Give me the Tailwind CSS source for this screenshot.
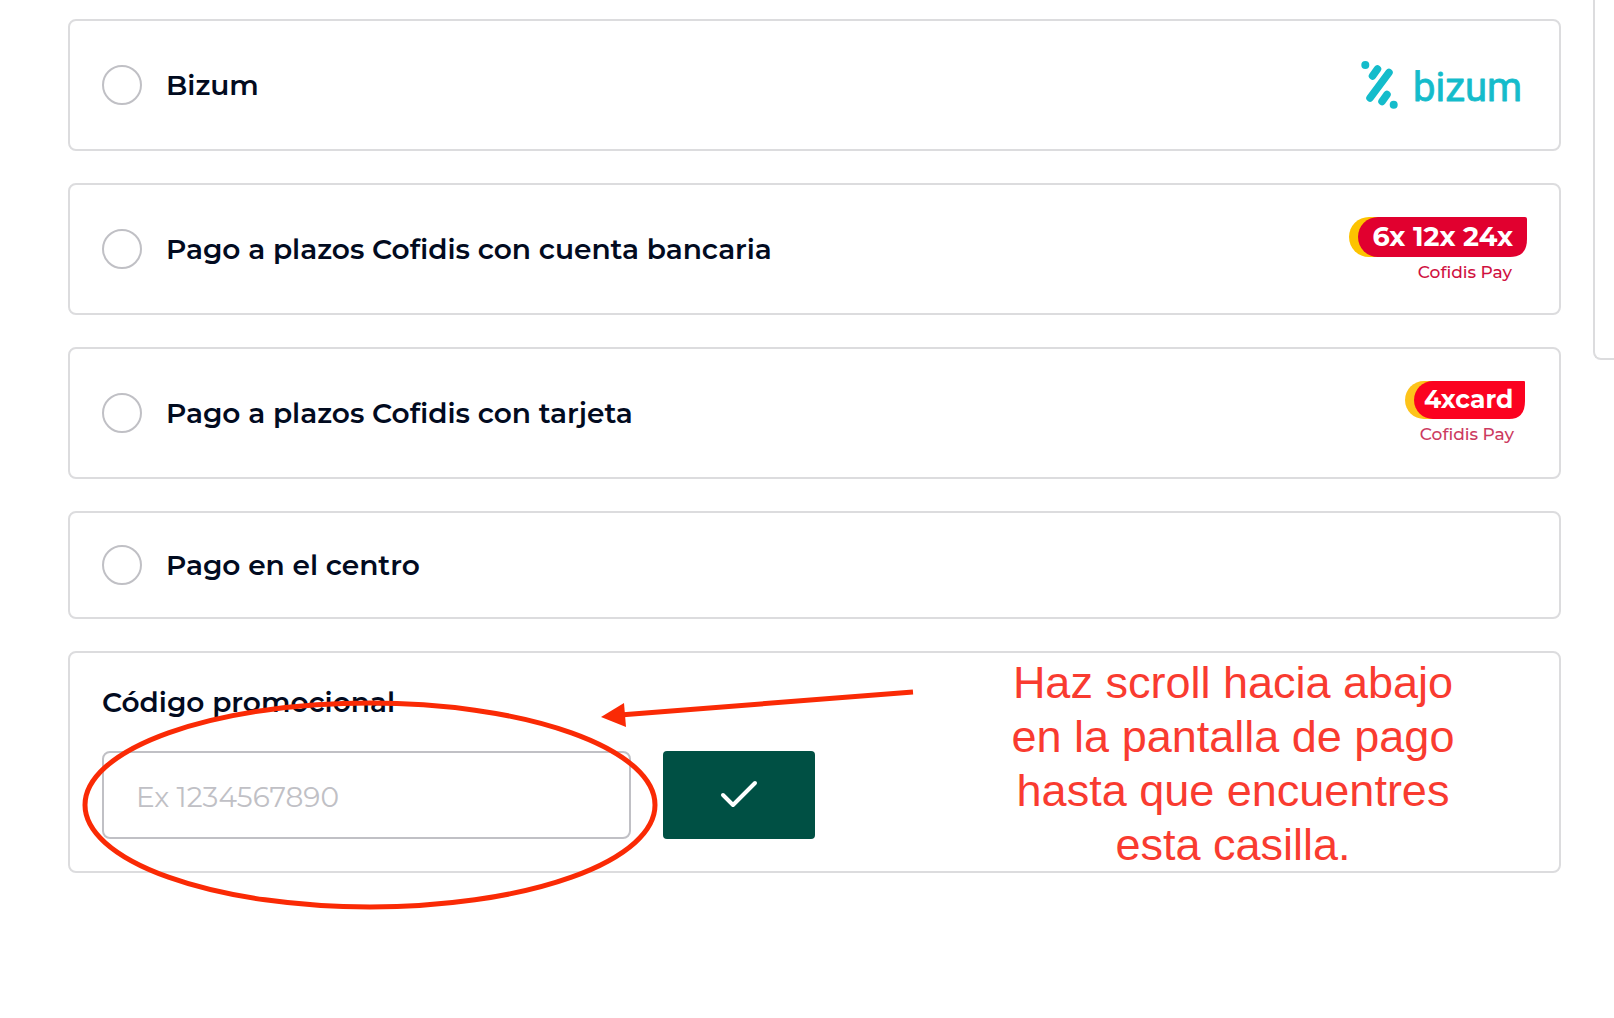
<!DOCTYPE html>
<html lang="es">
  <head>
    <meta charset="UTF-8" />
    <meta name="viewport" content="width=device-width, initial-scale=1.0" />
    <title>Métodos de pago</title>
    <script src="https://cdn.jsdelivr.net/npm/@tailwindcss/browser@4"></script>
  </head>
  <body class="flex items-start gap-8 min-h-screen overflow-x-hidden bg-white pl-17 font-['Montserrat','Inter',sans-serif] text-[28px] leading-[34px] text-[#020b1f]">
    <main class="flex flex-col flex-1 min-w-0 gap-8 pt-[19px] pb-8">
      <!-- Bizum -->
      <label class="flex items-center gap-6 p-8 border-2 border-[#dcdcde] rounded-lg cursor-pointer">
        <input type="radio" name="payment" value="bizum"
          class="w-10 h-10 shrink-0 appearance-none rounded-full border-2 border-[#c0c0c5] checked:border-[12px] checked:border-[#005044]" />
        <span class="flex-1 font-semibold">Bizum</span>
        <svg class="w-[180px] h-16 shrink-0" viewBox="0 0 180 64" role="img" aria-label="bizum">
          <g fill="none" stroke="#14bccb" stroke-width="7.5" stroke-linecap="round">
            <path d="M30.5 16 25.5 23" />
            <path d="M42 19.5 23 45" />
            <path d="M40 41.5 35 48.5" />
          </g>
          <circle cx="18.3" cy="12" r="4" fill="#14bccb" />
          <circle cx="46.7" cy="51.7" r="4" fill="#14bccb" />
          <text x="66" y="48" font-size="40" fill="#14bccb" stroke="#14bccb" stroke-width="0.8" stroke-linejoin="round" class="font-['Roboto',sans-serif]">bizum</text>
        </svg>
      </label>

      <!-- Cofidis cuenta bancaria -->
      <label class="flex items-center gap-6 p-8 border-2 border-[#dcdcde] rounded-lg cursor-pointer">
        <input type="radio" name="payment" value="cofidis-account"
          class="w-10 h-10 shrink-0 appearance-none rounded-full border-2 border-[#c0c0c5] checked:border-[12px] checked:border-[#005044]" />
        <span class="flex-1 font-semibold">Pago a plazos Cofidis con cuenta bancaria</span>
        <svg class="w-[180px] h-16 shrink-0" viewBox="0 0 180 64" role="img" aria-label="6x 12x 24x Cofidis Pay">
          <path d="M22 0H60V40H22A20 20 0 0 1 22 0Z" fill="#fdc300" />
          <path d="M31 0H178Q180 0 180 2V22Q180 40 163 40H31A20 20 0 0 1 31 0Z" fill="#e1002f" />
          <text x="166" y="29" font-size="27" font-weight="700" text-anchor="end" fill="#fff">6x 12x 24x</text>
          <text x="165" y="61" font-size="17" font-weight="500" text-anchor="end" fill="#d0103f">Cofidis Pay</text>
        </svg>
      </label>

      <!-- Cofidis tarjeta -->
      <label class="flex items-center gap-6 p-8 border-2 border-[#dcdcde] rounded-lg cursor-pointer">
        <input type="radio" name="payment" value="cofidis-card"
          class="w-10 h-10 shrink-0 appearance-none rounded-full border-2 border-[#c0c0c5] checked:border-[12px] checked:border-[#005044]" />
        <span class="flex-1 font-semibold">Pago a plazos Cofidis con tarjeta</span>
        <svg class="w-[122px] h-16 shrink-0" viewBox="0 0 122 64" role="img" aria-label="4xcard Cofidis Pay">
          <path d="M19 0H50V38H19A19 19 0 0 1 19 0Z" fill="#fdc31a" />
          <path d="M28 0H119Q120 0 120 1V20Q120 38 104 38H28A19 19 0 0 1 28 0Z" fill="#fb0220" />
          <text x="19" y="27" font-size="25" font-weight="700" fill="#fff">4xcard</text>
          <text x="109" y="59" font-size="17" font-weight="500" text-anchor="end" fill="#cc3a60">Cofidis Pay</text>
        </svg>
      </label>

      <!-- Centro -->
      <label class="flex items-center gap-6 p-8 border-2 border-[#dcdcde] rounded-lg cursor-pointer">
        <input type="radio" name="payment" value="center"
          class="w-10 h-10 shrink-0 appearance-none rounded-full border-2 border-[#c0c0c5] checked:border-[12px] checked:border-[#005044]" />
        <span class="flex-1 font-semibold">Pago en el centro</span>
      </label>

      <!-- Promo code -->
      <form class="relative p-8 border-2 border-[#dcdcde] rounded-lg">
        <label for="promo" class="block mb-8 font-semibold">Código promocional</label>
        <div class="flex gap-8">
          <input type="text" id="promo" name="promo" placeholder="Ex 1234567890"
            class="w-[529px] h-22 px-8 pt-1 border-2 border-[#c0c0c5] rounded-lg placeholder:text-[#c0c0c5]" />
          <button type="button" aria-label="Aplicar" class="flex items-center justify-center w-38 h-22 rounded bg-[#005044]">
            <svg class="w-10 h-10" viewBox="0 0 40 40" fill="none" stroke="#fff" stroke-width="4" stroke-linecap="round" stroke-linejoin="round">
              <path d="M4 20 14 30 36 8" />
            </svg>
          </button>
        </div>

        <!-- Notes over the form -->
        <svg class="absolute top-0 left-0 w-[860px] h-[270px] pointer-events-none" viewBox="0 0 860 270" fill="none" stroke="#fa2a05" stroke-width="5" aria-hidden="true">
          <ellipse cx="300" cy="152" rx="285" ry="102" />
          <path d="M550 62 843 39" />
          <path d="M531 64 554 50 556 74Z" fill="#fa2a05" stroke="none" />
        </svg>
        <p class="absolute inset-y-0 right-[86px] flex items-center w-[480px] justify-center pt-1 text-center pointer-events-none font-['Liberation_Sans',sans-serif] text-[45px] leading-[54px] text-[#f93b30]">
          Haz scroll hacia abajo<br />en la pantalla de pago<br />hasta que encuentres<br />esta casilla.
        </p>
      </form>
    </main>

    <aside class="w-[21px] h-[360px] shrink-0 border-l-2 border-b-2 border-[#dcdcde] rounded-bl-lg"></aside>
  </body>
</html>
